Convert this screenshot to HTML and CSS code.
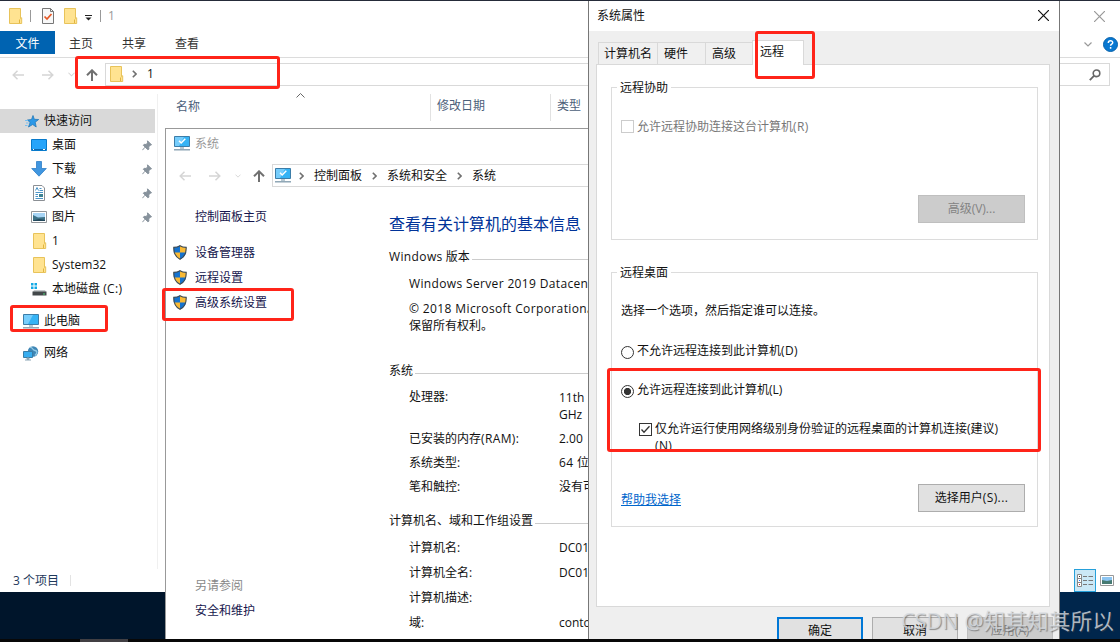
FILE: index.html
```html
<!DOCTYPE html>
<html lang="zh-CN">
<head>
<meta charset="utf-8">
<title>系统属性</title>
<link rel="stylesheet" href="styles.css">
</head>
<body>
<svg class="defs" width="0" height="0">
  <symbol id="folder" viewBox="0 0 14 16"><path d="M.5.5h11v10.2l1.2-1v5.800H.5z" fill="#ffe391" stroke="#e8c35a"/><path d="M10.500 11.500v3.500" stroke="#e2b53e"/></symbol>
  <symbol id="back" viewBox="0 0 12 10"><path d="M12 5H1M5.500.7 1.200 5l4.300 4.300" fill="none" stroke="currentColor" stroke-width="1.500"/></symbol>
  <symbol id="fwd" viewBox="0 0 12 10"><path d="M0 5h11M6.500.7 10.800 5 6.500 9.300" fill="none" stroke="currentColor" stroke-width="1.500"/></symbol>
  <symbol id="up" viewBox="0 0 12 12"><path d="M6 12V1.500M1 6.300l5-5 5 5" fill="none" stroke="currentColor" stroke-width="2"/></symbol>
  <symbol id="down" viewBox="0 0 8 5"><path d="m.5.5 3.500 3.500L7.500.5" fill="none" stroke="currentColor" stroke-width="1.200"/></symbol>
  <symbol id="right" viewBox="0 0 5 8"><path d="m.8.800 3.200 3.200L.8 7.200" fill="none" stroke="currentColor" stroke-width="1.600"/></symbol>
  <symbol id="close" viewBox="0 0 10 10"><path d="m0 0 10 10M10 0 0 10" stroke="currentColor" stroke-width="1.100"/></symbol>
  <symbol id="pin" viewBox="0 0 10 11"><path d="m5.500.8 4 4-1.200.4-1.600 1.700.2 2.200-1 .7L1.300 5.200l.9-.9 2.200.2L5.500 2.700zM3 7.200.4 10.200" fill="#87929c" stroke="#87929c"/></symbol>
  <symbol id="pc" viewBox="0 0 16 15"><path d="M.5.500h15v10H.5z" fill="#35b3f5" stroke="#3c7da8"/><path d="M1 1h9L5 10H1z" fill="#76cdfc"/><path d="M6 11h4v2H6z" fill="#b7c8d2"/><path d="M0 13.800h16" stroke="#7e99aa" stroke-width="1.300"/></symbol>
  <symbol id="pccheck" viewBox="0 0 16 15"><use href="#pc"/><path d="m5 4.800 2.200 2.200L11.300 2.800" fill="none" stroke="#fff" stroke-width="1.500"/></symbol>
  <symbol id="shield" viewBox="0 0 14 15"><path d="M7 .5c2 1.400 4 1.800 6.300 1.800.3 5.700-1.300 9.600-6.300 12.200C2 11.900.4 8 .7 2.300 3 2.300 5 1.900 7 .5z" fill="#f9b934"/><path d="M7 .5v7H.9C.6 6 .6 4 .7 2.300 3 2.300 5 1.900 7 .5zM7 7.500h6.100c-.8 3.200-2.700 5.500-6.100 7z" fill="#1573cf"/><path d="M7 .7c2 1.400 4 1.700 6.200 1.700.2 5.600-1.300 9.400-6.200 11.900C2.100 11.800.6 8 .8 2.400 3 2.400 5 2.100 7 .7z" fill="none" stroke="#3d4b57" stroke-width="1.100"/></symbol>
</svg>

<div class="desktop">
  <section class="explorer">
    <header class="ex-title">
      <svg class="t1" width="14" height="16"><use href="#folder"/></svg><i class="bar"></i>
      <svg class="t2" width="12" height="16"><path d="M.5.500h8l3 3v12H.5z" fill="#f8f8f8" stroke="#777"/><path d="M8.500.5v3h3" fill="none" stroke="#777"/><path d="m2.500 8.500 2.500 2.500 4.500-5" fill="none" stroke="#e55725" stroke-width="1.700"/></svg>
      <svg class="t3" width="14" height="16"><use href="#folder"/></svg>
      <svg class="t4" width="7" height="6"><path d="M0 .5h7" stroke="#222"/><path d="M.5 2.500h6l-3 3z" fill="#222"/></svg>
      <i class="bar"></i><span class="dim">1</span>
      <svg class="t-close" width="11" height="11"><use href="#close"/></svg>
    </header>
    <nav class="ribbon">
      <b class="file">文件</b><span>主页</span><span>共享</span><span>查看</span>
      <svg class="rb-down" width="8" height="5"><use href="#down"/></svg>
      <svg class="help" width="15" height="15"><circle cx="7.500" cy="7.500" r="7" fill="#0878d1" stroke="#0862ab"/><path d="M5.300 5.900c0-3 4.600-2.800 4.400-.2-.1 1.400-2.100 1.500-2.100 3M7.600 10v1.800" fill="none" stroke="#fff" stroke-width="1.500"/></svg>
    </nav>
    <div class="ex-address">
      <svg class="pale" width="12" height="10"><use href="#back"/></svg>
      <svg class="pale fw" width="12" height="10"><use href="#fwd"/></svg>
      <svg class="pale dn" width="7" height="5"><use href="#down"/></svg>
      <svg class="grey upw" width="12" height="12"><use href="#up"/></svg>
      <div class="ex-path"><svg width="14" height="16"><use href="#folder"/></svg><svg class="grey" width="5" height="8"><use href="#right"/></svg><span>1</span></div>
      <div class="search"><svg width="12" height="12"><circle cx="7.500" cy="4.300" r="3.300" fill="none" stroke="#666" stroke-width="1.600"/><path d="M5.200 6.700.8 11.200" stroke="#666" stroke-width="1.800"/></svg></div>
    </div>
    <div class="ex-body">
      <aside class="tree">
        <div class="node top"><svg width="14" height="13"><path d="m8 .5 1.300 3.800 4.400.2-3.500 2.700 1 4.800-3.500-2.500L3.500 12l1.600-4.500L2.500 5l4-.5z" fill="#2b98e8" stroke="#2478b8" stroke-width=".8"/><path d="M0 5.500h3M1 8h2.500M0 10.500h2.500" stroke="#78bff0"/></svg><span>快速访问</span></div>
        <div class="node"><svg width="16" height="12"><path d="M.5.500h15v11H.5z" fill="#26a4fa" stroke="#087acb"/><path d="M1 10.500h14" stroke="#0b69b2"/><path d="M2 10.500h1m9 0h2" stroke="#fff"/></svg><span>桌面</span><svg class="pin" width="10" height="11"><use href="#pin"/></svg></div>
        <div class="node"><svg width="16" height="16"><path d="M5.500.5h5v7h4.800L8 15.200.7 7.500h4.800z" fill="#4096e0" stroke="#2f7fc6" stroke-width=".8"/></svg><span>下载</span><svg class="pin" width="10" height="11"><use href="#pin"/></svg></div>
        <div class="node"><svg width="16" height="16"><path d="M2.500.5h8.500l2.500 2.500v12.500h-11z" fill="#fff" stroke="#8b8f94"/><path d="M4.500 5.500 6 2.500l1.500 3M8.500 3.500h2M8.500 5.500h3.500M4.500 7.500H12M4.500 9.500H7M4.500 11.500H7M4.500 13.500H12" fill="none" stroke="#4a94c7"/><path d="M8 9h4v3H8z" fill="#3c8292"/></svg><span>文档</span><svg class="pin" width="10" height="11"><use href="#pin"/></svg></div>
        <div class="node"><svg width="16" height="12"><path d="M.5.500h15v11H.5z" fill="#fff" stroke="#92969a"/><path d="M2 2h12v8H2z" fill="#a6d4f5"/><path d="m2 4 5 2.500 7-.5v4H2z" fill="#3b7187"/><path d="M2 9.500 8 8l6 1v1H2z" fill="#23475b"/></svg><span>图片</span><svg class="pin" width="10" height="11"><use href="#pin"/></svg></div>
        <div class="node"><svg class="fo" width="14" height="16"><use href="#folder"/></svg><span>1</span></div>
        <div class="node"><svg class="fo" width="14" height="16"><use href="#folder"/></svg><span>System32</span></div>
        <div class="node"><svg width="16" height="14"><path d="M0 1h2.500v2.500H0zM3.500 1H6v2.500H3.500zM0 4.500h2.500V7H0zM3.500 4.500H6V7H3.500z" fill="#14a9e5"/><path d="M3 8h11l1 2H2z" fill="#c4c8ca"/><path d="M1.500 9.500h14v4h-14z" fill="#43484a"/><path d="M12 12h2" stroke="#4ed277"/></svg><span>本地磁盘 <em>(C:)</em></span></div>
        <div class="node root first"><svg width="16" height="15"><use href="#pc"/></svg><span>此电脑</span></div>
        <div class="node root"><svg width="16" height="15"><circle cx="10" cy="5.500" r="5.200" fill="#3f86b5"/><path d="M7 1.500c3-.5 2 2.500 5 3s2 3 0 5" fill="none" stroke="#93cbe6" stroke-width="1.300"/><path d="M.5 5.500h9v6h-9z" fill="#38adef" stroke="#397da6"/><path d="M4 12h2v1.500H4zM2 14h6" fill="#8ba6b5" stroke="#8ba6b5"/></svg><span>网络</span></div>
      </aside>
      <div class="files">
        <span class="c1">名称</span><svg class="sort" width="9" height="5"><path d="m.5 4.500 4-4 4 4" fill="none" stroke="#666"/></svg><span class="c2">修改日期</span><span class="c3">类型</span>
      </div>
    </div>
    <footer class="status"><span>3 个项目</span><i></i>
      <div class="views">
        <div class="details"><svg width="16" height="13"><path d="M.5.500h4v12h-4zM.5 4.500h4M.5 8.500h4" fill="#fff" stroke="#888"/><path d="M6 2.500h4m1.500 0H16M6 6.500h4m1.500 0H16M6 10.500h4m1.500 0H16" stroke="#777"/><path d="M2 2.500h1" stroke="#333"/><path d="M2 6.500h1" stroke="#27f"/><path d="M2 10.500h1" stroke="#d22"/></svg></div>
        <svg width="14" height="11"><path d="M.5.500h13v10H.5z" fill="#fff" stroke="#999"/><path d="M2 2h10v7H2z" fill="#8cc5f2"/><path d="m2 5 5 1 5-1v4H2z" fill="#467a72"/></svg>
      </div>
    </footer>
  </section>

  <section class="system">
    <header class="sys-title"><svg width="16" height="15"><use href="#pccheck"/></svg><span>系统</span></header>
    <div class="sys-address">
      <svg class="pale" width="12" height="10"><use href="#back"/></svg>
      <svg class="pale fw" width="12" height="10"><use href="#fwd"/></svg>
      <svg class="pale dn" width="6" height="4" viewBox="0 0 8 5"><use href="#down"/></svg>
      <svg class="grey upw" width="12" height="12"><use href="#up"/></svg>
      <div class="sys-path"><svg width="16" height="15"><use href="#pccheck"/></svg><svg class="grey" width="5" height="8"><use href="#right"/></svg><span>控制面板</span><svg class="grey" width="5" height="8"><use href="#right"/></svg><span>系统和安全</span><svg class="grey" width="5" height="8"><use href="#right"/></svg><span>系统</span></div>
    </div>
    <div class="sys-body">
      <aside class="links">
        <span class="home">控制面板主页</span>
        <div><svg width="14" height="15"><use href="#shield"/></svg><span>设备管理器</span></div>
        <div><svg width="14" height="15"><use href="#shield"/></svg><span>远程设置</span></div>
        <div><svg width="14" height="15"><use href="#shield"/></svg><span>高级系统设置</span></div>
        <span class="also">另请参阅</span><span>安全和维护</span>
      </aside>
      <main class="info">
        <h1>查看有关计算机的基本信息</h1>
        <h2 class="edition"><em>Windows</em>&nbsp;版本</h2>
        <p class="product">Windows Server 2019 Datacenter</p>
        <p class="copy"><em>© 2018 Microsoft Corporation</em>。<br>保留所有权利。</p>
        <h2 class="sys">系统</h2>
        <dl class="hardware">
          <dt>处理器:</dt><dd>11th&nbsp; Gen<br>GHz</dd>
          <dt>已安装的内存<em>(RAM):</em></dt><dd>2.00&nbsp; GB</dd>
          <dt>系统类型:</dt><dd><em>64 </em>位操作</dd>
          <dt>笔和触控:</dt><dd>没有可用</dd>
        </dl>
        <h2 class="names">计算机名、域和工作组设置</h2>
        <dl class="domain">
          <dt>计算机名:</dt><dd>DC01</dd><dt>计算机全名:</dt><dd>DC01.contoso</dd><dt>计算机描述:</dt><dd></dd><dt>域:</dt><dd>contoso</dd>
        </dl>
      </main>
    </div>
  </section>

  <section class="dialog">
    <header class="dlg-title"><span>系统属性</span><svg width="11" height="11"><use href="#close"/></svg></header>
    <div class="dlg-body">
      <nav class="tabs"><span class="tab a">计算机名</span><span class="tab b">硬件</span><span class="tab c">高级</span><span class="tab active">远程</span></nav>
      <div class="panel">
        <div class="group assist"><span class="legend">远程协助</span>
          <div class="option disabled"><i class="box"></i><span>允许远程协助连接这台计算机<em>(R)</em></span></div>
          <div class="btn off">高级(V)...</div>
        </div>
        <div class="group remote"><span class="legend">远程桌面</span>
          <p>选择一个选项，然后指定谁可以连接。</p>
          <div class="option deny"><i class="radio"></i><span>不允许远程连接到此计算机<em>(D)</em></span></div>
          <div class="option allow"><i class="radio on"></i><span>允许远程连接到此计算机(L)</span></div>
          <div class="option nla"><i class="box"><svg width="11" height="11"><path d="m1.500 5.500 2.500 2.800L9.500 2.200" fill="none" stroke="#333" stroke-width="1.300"/></svg></i><span>仅允许运行使用网络级别身份验证的远程桌面的计算机连接(建议)<br><em>(N)</em></span></div>
          <div class="help-row"><span class="link">帮助我选择</span><div class="btn">选择用户<em>(S)...</em></div></div>
        </div>
      </div>
      <div class="actions"><div class="btn ok">确定</div><div class="btn">取消</div><div class="btn off">应用(A)</div></div>
    </div>
  </section>

  <div class="taskbar"><i></i></div>
  <div class="mark path-mark"></div><div class="mark pc-mark"></div><div class="mark settings-mark"></div><div class="mark tab-mark"></div><div class="mark allow-mark"></div>
  <div class="watermark">CSDN @知其知其所以</div>
</div>
</body>
</html>
```
FILE: styles.css
```css
* { box-sizing: border-box; }
body, h1, h2, p, dl, dd { margin: 0; font-weight: 400; }
body { font: 12px/16px "Open Sans", "Noto Sans CJK SC", sans-serif; color: #111; }
i { font-style: normal; }
em { font-style: normal; letter-spacing: .38px; }
svg { display: block; flex: none; }
span { white-space: nowrap; }
.defs { position: absolute; }
.desktop { position: relative; width: 1120px; height: 642px; overflow: hidden; background: linear-gradient(90deg, #00152b 165px, #00264c 1060px); border-top: 1px solid #252b39; }
.pale { color: #d5d5d5; }
.grey { color: #707070; }

/* Explorer window */
.explorer { position: absolute; left: 0; top: 0; width: 1120px; height: 591px; background: #fff; display: flex; flex-direction: column; }
.ex-title { height: 30px; display: flex; align-items: center; padding: 0 15px 0 9px; }
.bar { width: 1px; height: 12px; background: #999; }
.t1 { margin-right: 7px; }
.t2 { margin-left: 11px; }
.t3 { margin-left: 10px; }
.t4 { margin: 3px 8px 0 7px; }
.dim { margin-left: 7px; color: #999; }
.t-close { margin-left: auto; color: #999; }
.ribbon { height: 27px; border-bottom: 1px solid #dcdcdc; display: flex; align-items: center; padding-bottom: 3px; color: #333; }
.file { width: 55px; height: 23px; line-height: 25px; background: #0063b1; color: #fff; text-align: center; font-weight: 400; margin-right: 14px; }
.ribbon span { margin-right: 29px; padding-top: 2px; }
.rb-down { margin: 3px 11px 0 auto; color: #999; }
.help { margin: 3px 2px 0 0; }
.ex-address { height: 33px; display: flex; align-items: center; padding: 0 10px 0 12px; }
.fw { margin-left: 18px; }
.dn { margin-left: 14px; }
.ex-address .upw { margin-left: 11px; }
.ex-path { flex: 1; height: 23px; border: 1px solid #d9d9d9; margin-left: 7px; display: flex; align-items: center; padding: 0 0 1px 4px; }
.ex-path .grey { margin: 0 10px 0 8px; }
.search { width: 200px; height: 23px; margin-left: 10px; border: 1px solid #d9d9d9; display: flex; justify-content: flex-end; align-items: center; padding-right: 8px; }
.ex-body { flex: 1; display: flex; }
.tree { width: 158px; margin: 3px 0 0; height: 475px; border-right: 1px solid #f0f0f0; padding-top: 15px; }
.node { height: 24px; width: 155px; display: flex; align-items: center; padding: 0 3px 0 31px; }
.node span { margin-left: 5px; }
.node.top { background: #d9d9d9; padding-left: 25px; }
.node .fo { margin-left: 2px; }
.pin { margin-left: auto; }
.node.root { padding-left: 23px; margin-top: 8px; }
.files { flex: 1; display: flex; height: 31px; align-items: center; color: #4c607a; padding: 0 0 0 18px; }
.c1 { width: 120px; }
.sort { margin-top: -22px; }
.c2, .c3 { border-left: 1px solid #e2e2e2; height: 27px; line-height: 24px; padding-left: 6px; margin-top: 2px; }
.c2 { margin-left: 125px; width: 120px; }
.status { height: 23px; display: flex; align-items: center; padding-left: 13px; color: #1e395b; }
.status > i { height: 11px; width: 1px; background: #e3e3e3; margin-left: 11px; }
.views { margin-left: auto; margin-right: 6px; display: flex; align-items: center; gap: 4px; }
.details { width: 22px; height: 23px; border: 1px solid #26a0da; background: #cbe8f6; display: flex; align-items: center; justify-content: center; }

/* System window */
.system { position: absolute; left: 165px; top: 127px; width: 600px; height: 511px; background: #fff; border: 1px solid #999; border-bottom: 0; overflow: hidden; }
.sys-title { height: 30px; display: flex; align-items: center; padding-left: 8px; color: #999; }
.sys-title svg { margin-bottom: 2px; }
.sys-title span { margin-left: 5px; }
.sys-address { height: 33px; display: flex; align-items: center; padding-left: 13px; }
.sys-address .upw { margin-left: 12px; }
.sys-path { flex: 1; height: 23px; margin-left: 7px; border: 1px solid #d9d9d9; display: flex; align-items: center; padding-left: 2px; }
.sys-path .grey { margin: 0 10px; }
.sys-path svg + .grey { margin-left: 8px; }
.sys-body { display: flex; }
.links { width: 223px; padding: 17px 0 0 7px; display: flex; flex-direction: column; color: #16164d; }
.links > div { height: 25px; display: flex; align-items: center; }
.links > div svg { margin-bottom: 1px; }
.links > div span { margin-left: 8px; }
.links > span { margin-left: 22px; }
.links .home { margin-bottom: 15px; }
.links .also { margin: 263px 0 9px; margin-left: 22px; color: #888; }
.info { flex: 1; padding-top: 21px; }
.info h1 { font-size: 16px; line-height: 22px; color: #039; }
.info h2 { font-size: 12px; display: flex; align-items: center; white-space: nowrap; }
.info h2::after { content: ""; flex: 1; height: 1px; background: #ccc; margin: 4px 0 0 2px; }
.edition { margin-top: 14px; }
.product { margin: 11px 0 8px 20px; letter-spacing: .35px; }
.copy { margin-left: 20px; line-height: 17px; }
.info .sys { margin: 29px 0 10px; }
.info .names { margin: 18px 0 11px; }
dl { display: grid; grid-template-columns: 150px 1fr; padding-left: 20px; }
.hardware { row-gap: 8px; }
.hardware dd:first-of-type { line-height: 17px; }
.hardware dd { white-space: nowrap; }
.domain { row-gap: 9px; }

/* Properties dialog */
.dialog { position: absolute; left: 588px; top: 0; width: 472px; height: 638px; background: #efefef; border: solid #777; border-width: 0 1px; overflow: hidden; }
.dlg-title { height: 30px; background: #fff; display: flex; align-items: center; justify-content: space-between; padding: 0 10px 1px 8px; }
.dlg-title span { padding-top: 1px; }
.dlg-body { padding: 9px 9px 0 7px; }
.tabs { height: 24px; display: flex; align-items: flex-end; padding-left: 2px; }
.tab { height: 22px; border: 1px solid #d9d9d9; border-width: 1px 0 0 1px; line-height: 22px; padding-left: 5px; background: #f0f0f0; }
.tab.a { width: 59px; }
.tab.b { width: 48px; padding-left: 6px; }
.tab.c { width: 47px; padding-left: 6px; }
.tab.active { height: 25px; width: 52px; border-width: 1px 1px 0; background: #fff; margin-bottom: -1px; padding-left: 7px; position: relative; }
.panel { height: 543px; border: 1px solid #d9d9d9; background: #fff; padding: 22px 11px 0 14px; }
.group { border: 1px solid #dcdcdc; display: flex; flex-direction: column; }
.legend { align-self: flex-start; margin: -8px 0 0 5px; background: #fff; padding: 0 3px; }
.assist { height: 153px; }
.remote { height: 255px; margin-top: 32px; padding-left: 9px; }
.remote .legend { margin-left: -4px; }
.option { display: flex; }
.option span { margin-left: 3px; }
.box, .radio { width: 13px; height: 13px; border: 1px solid #333; flex: none; margin-top: 2px; }
.radio { border-radius: 50%; margin-top: 3px; }
.radio.on { background: radial-gradient(circle, #333 3.300px, #fff 3.900px); }
.disabled { color: #777; margin: 23px 0 0 9px; }
.disabled .box { border-color: #ccc; margin-top: 1px; }
.btn { width: 107px; height: 28px; line-height: 25px; text-align: center; border: 1px solid #adadad; background: #e1e1e1; }
.btn.off { background: #ccc; border-color: #bfbfbf; color: #838383; }
.assist .btn { margin: 60px 12px 0 auto; }
.remote p { margin-top: 22px; }
.deny { margin-top: 24px; }
.allow { margin-top: 23px; }
.nla { margin: 22px 0 0 18px; line-height: 17px; }
.nla .box { margin-top: 3px; }
.nla em { display: inline-block; margin-top: -1px; }
.help-row { display: flex; justify-content: space-between; align-items: center; margin: 30px 12px 0 0; }
.link { color: #0066cc; text-decoration: underline; margin-top: 3px; }
.actions { display: flex; justify-content: flex-end; gap: 9px; margin: 10px -3px 0 0; }
.actions .btn { width: 86px; }
.actions .ok { border: 2px solid #0078d7; line-height: 23px; }

.taskbar { position: absolute; left: 0; top: 638px; width: 1120px; height: 3px; background: #080808; }
.taskbar i { display: block; width: 48px; height: 3px; margin-left: 80px; background: #413f43; }

/* Highlight frames over the windows */
.mark { position: absolute; border: 3px solid #ff2419; border-radius: 3px; }
.path-mark { left: 75px; top: 55px; width: 205px; height: 33px; }
.pc-mark { left: 10px; top: 304px; width: 98px; height: 27px; }
.settings-mark { left: 162px; top: 287px; width: 132px; height: 33px; }
.tab-mark { left: 755px; top: 30px; width: 60px; height: 48px; }
.allow-mark { left: 607px; top: 367px; width: 434px; height: 84px; }
.watermark { position: absolute; left: 901px; top: 607px; font-size: 21.700px; line-height: 26px; white-space: nowrap; color: rgba(215,220,225,.8); text-shadow: 1px 1px 1px rgba(70,70,70,.55); }
```
